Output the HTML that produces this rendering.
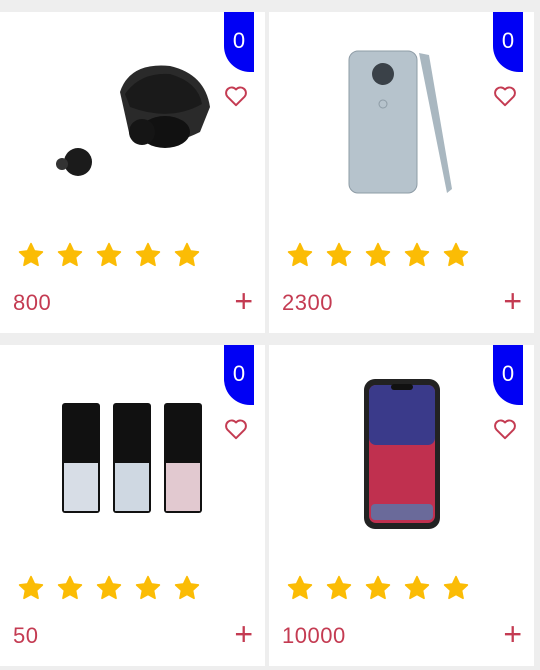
<!DOCTYPE html>
<html><head><meta charset="utf-8"><style>
*{margin:0;padding:0;box-sizing:border-box}
body{width:540px;height:670px;background:#eeeeee;position:relative;overflow:hidden;font-family:"Liberation Sans",sans-serif}
.card{position:absolute;width:265px;height:321px;background:#fff}
.badge{position:absolute;right:11px;top:0;width:30px;height:60px;background:#0000f5;border-bottom-left-radius:26px;color:#fff;font-size:22px;text-align:center;padding-top:16px}
.heart{position:absolute;right:16px;top:71px}
.stars{position:absolute;left:18px;top:230px;display:flex;gap:13px}
.price{position:absolute;left:13px;top:278px;font-size:22px;color:#c43b52;letter-spacing:0.5px}
.plus{position:absolute;right:12px;top:277px;font-size:32px;color:#c43b52;line-height:24px}
.img{position:absolute}
</style></head><body>
<svg width="0" height="0" style="position:absolute"><defs>
<symbol id="st" viewBox="0 0 24 24"><path d="M12 1.5l3.2 6.8 7.3.9-5.4 5 1.4 7.3L12 17.9l-6.5 3.6 1.4-7.3-5.4-5 7.3-.9z" fill="#fbbc05" stroke="#fbbc05" stroke-width="1.5" stroke-linejoin="round"/></symbol>
<symbol id="ht" viewBox="0 0 24 24"><path d="M12 20.5l-8-8A4.8 4.8 0 0 1 12 6a4.8 4.8 0 0 1 8 6.5z" fill="none" stroke="#c43b52" stroke-width="1.8" stroke-linejoin="round"/></symbol>
</defs></svg>

<div class="card" style="left:0;top:12px">
<svg class="img" style="left:50px;top:40px" width="165" height="135" viewBox="0 0 165 135">
<path d="M70 40 Q80 10 120 14 Q155 22 160 55 L150 80 Q110 100 80 85 Z" fill="#2a2a2a"/>
<path d="M75 42 Q90 20 120 22 Q148 30 152 52 Q120 70 80 55Z" fill="#1a1a1a"/>
<ellipse cx="115" cy="80" rx="25" ry="16" fill="#111"/>
<circle cx="92" cy="80" r="13" fill="#151515"/>
<circle cx="28" cy="110" r="14" fill="#1b1b1b"/>
<circle cx="12" cy="112" r="6" fill="#333"/>
</svg>
<div class="badge">0</div>
<svg class="heart" width="26" height="26"><use href="#ht"/></svg>
<div class="stars"><svg width="26" height="26"><use href="#st"/></svg><svg width="26" height="26"><use href="#st"/></svg><svg width="26" height="26"><use href="#st"/></svg><svg width="26" height="26"><use href="#st"/></svg><svg width="26" height="26"><use href="#st"/></svg></div>
<div class="price">800</div><div class="plus">+</div>
</div>

<div class="card" style="left:269px;top:12px">
<svg class="img" style="left:78px;top:37px" width="110" height="160" viewBox="0 0 110 160">
<rect x="2" y="2" width="68" height="142" rx="9" fill="#b6c3cc" stroke="#8e9ca6"/>
<circle cx="36" cy="25" r="11" fill="#3a4148"/>
<circle cx="36" cy="55" r="4" fill="none" stroke="#8e9ca6"/>
<path d="M72 4 L82 6 L105 140 L100 144 Z" fill="#a9b7c0"/>
</svg>
<div class="badge">0</div>
<svg class="heart" width="26" height="26"><use href="#ht"/></svg>
<div class="stars"><svg width="26" height="26"><use href="#st"/></svg><svg width="26" height="26"><use href="#st"/></svg><svg width="26" height="26"><use href="#st"/></svg><svg width="26" height="26"><use href="#st"/></svg><svg width="26" height="26"><use href="#st"/></svg></div>
<div class="price">2300</div><div class="plus">+</div>
</div>

<div class="card" style="left:0;top:345px">
<svg class="img" style="left:60px;top:56px" width="145" height="115" viewBox="0 0 145 115">
<g><rect x="2" y="2" width="38" height="110" rx="3" fill="#111"/><rect x="4" y="62" width="34" height="48" fill="#d7dde6"/></g>
<g><rect x="53" y="2" width="38" height="110" rx="3" fill="#111"/><rect x="55" y="62" width="34" height="48" fill="#cfd8e2"/></g>
<g><rect x="104" y="2" width="38" height="110" rx="3" fill="#111"/><rect x="106" y="62" width="34" height="48" fill="#e2c9d0"/></g>
</svg>
<div class="badge">0</div>
<svg class="heart" width="26" height="26"><use href="#ht"/></svg>
<div class="stars"><svg width="26" height="26"><use href="#st"/></svg><svg width="26" height="26"><use href="#st"/></svg><svg width="26" height="26"><use href="#st"/></svg><svg width="26" height="26"><use href="#st"/></svg><svg width="26" height="26"><use href="#st"/></svg></div>
<div class="price">50</div><div class="plus">+</div>
</div>

<div class="card" style="left:269px;top:345px">
<svg class="img" style="left:94px;top:33px" width="80" height="152" viewBox="0 0 80 152">
<rect x="1" y="1" width="76" height="150" rx="11" fill="#222"/>
<rect x="6" y="7" width="66" height="138" rx="7" fill="#c0304f"/>
<rect x="6" y="7" width="66" height="60" rx="7" fill="#3a3a8a"/>
<rect x="28" y="6" width="22" height="6" rx="3" fill="#111"/>
<rect x="8" y="126" width="62" height="16" rx="4" fill="#6a6a9a"/>
</svg>
<div class="badge">0</div>
<svg class="heart" width="26" height="26"><use href="#ht"/></svg>
<div class="stars"><svg width="26" height="26"><use href="#st"/></svg><svg width="26" height="26"><use href="#st"/></svg><svg width="26" height="26"><use href="#st"/></svg><svg width="26" height="26"><use href="#st"/></svg><svg width="26" height="26"><use href="#st"/></svg></div>
<div class="price">10000</div><div class="plus">+</div>
</div>
</body></html>
